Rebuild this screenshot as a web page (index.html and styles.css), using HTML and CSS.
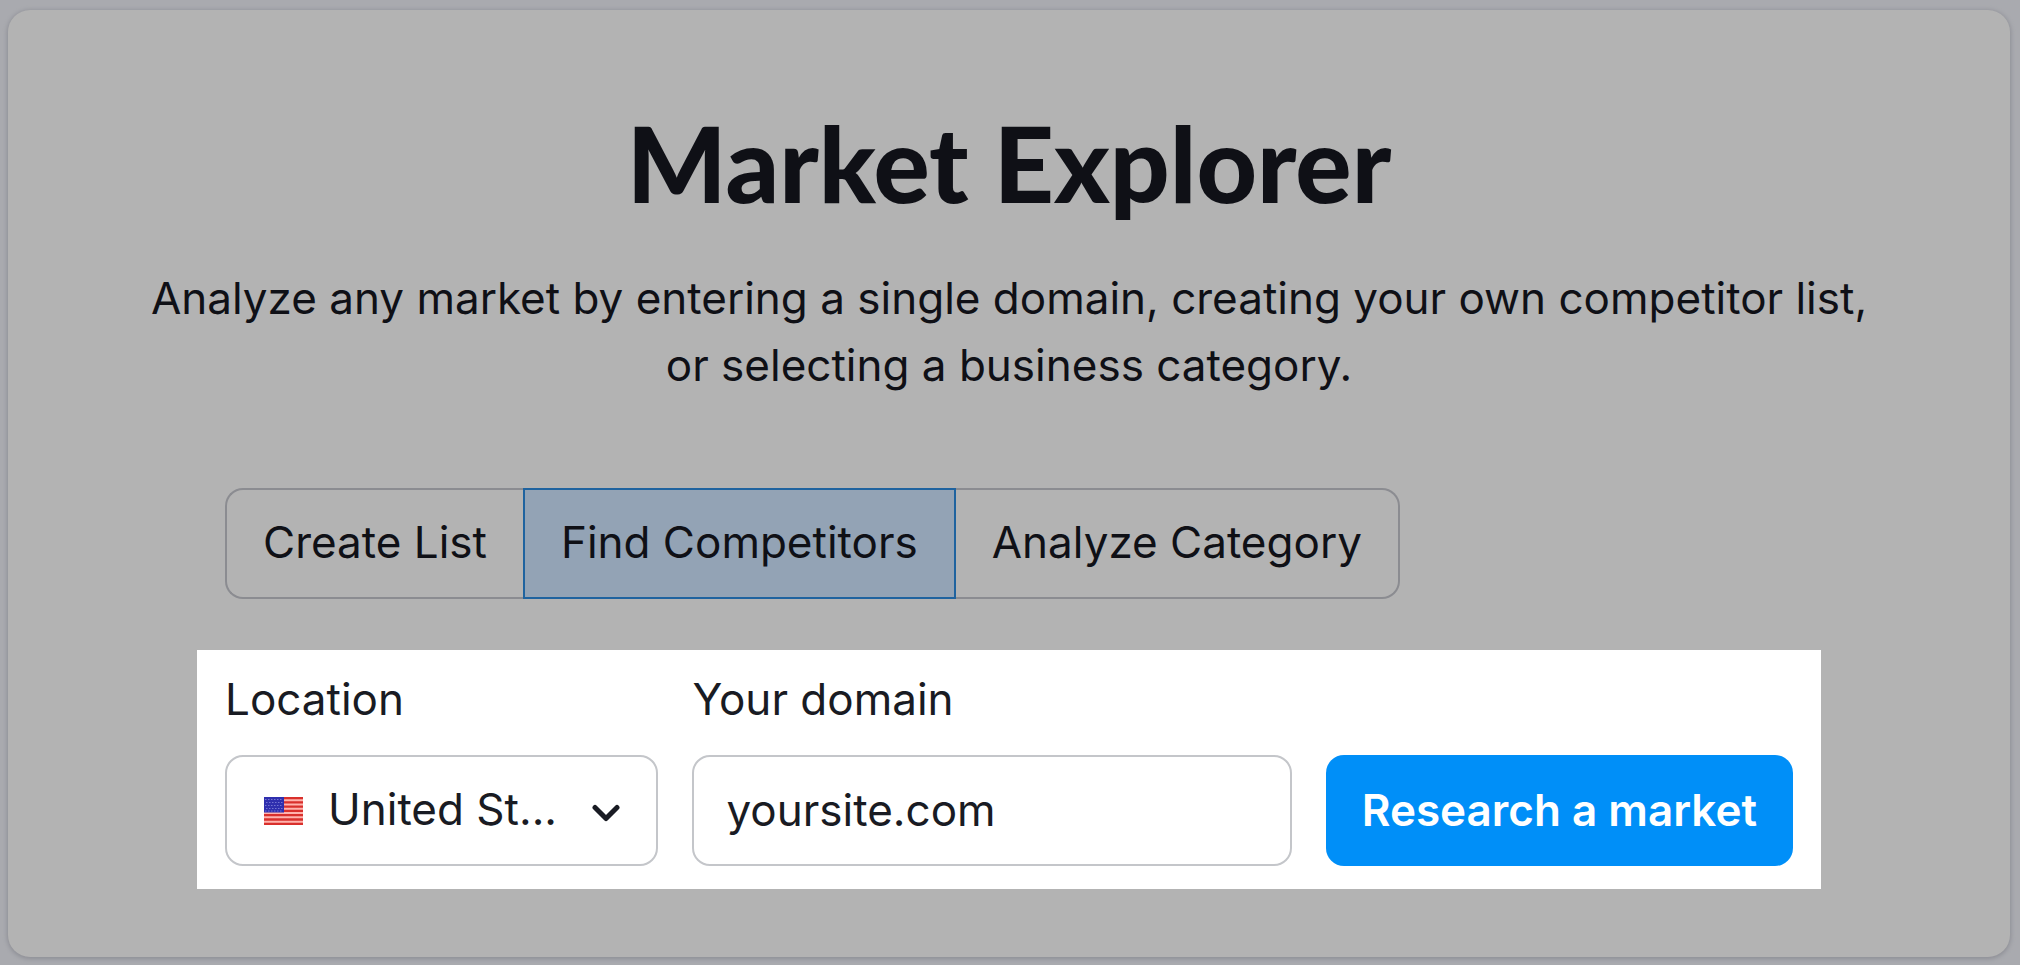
FILE: index.html
```html
<!DOCTYPE html>
<html lang="en">
<head>
<meta charset="utf-8">
<title>Market Explorer</title>
<link rel="stylesheet" href="styles.css">
</head>
<body>
<main class="card">
  <h1 class="title">Market Explorer</h1>
  <p class="lead">Analyze any market by entering a single domain, creating your own competitor list, or selecting a business category.</p>
  <div class="content">
    <div class="tabs">
      <button class="tab" type="button">Create List</button>
      <button class="tab tab-active" type="button" aria-pressed="true">Find Competitors</button>
      <button class="tab" type="button">Analyze Category</button>
    </div>
    <form class="search">
      <div class="field">
        <label class="label" for="location">Location</label>
        <div class="select-wrap">
          <select class="control select" id="location">
            <option>United St...</option>
          </select>
          <svg class="flag" viewBox="0 0 39 28" aria-hidden="true">
            <rect width="39" height="28" fill="#ffb3ad"/>
            <path d="M0 1h39M0 5.3h39M0 9.6h39M0 13.9h39M0 18.2h39M0 22.5h39M0 26.8h39" stroke="#d9302c" stroke-width="2.3"/>
            <rect width="20" height="15.5" fill="#2f2fae"/>
            <path d="M1 2.5h18M2 5.5h17M1 8.5h18M2 11.5h17M1 14h18" stroke="#7474d2" stroke-width="1" stroke-dasharray="1.5 1.5"/>
          </svg>
          <svg class="chevron" viewBox="0 0 28 18" aria-hidden="true">
            <path d="M3 3.5l11 11 11-11" fill="none" stroke="#191b23" stroke-width="5" stroke-linecap="round" stroke-linejoin="round"/>
          </svg>
        </div>
      </div>
      <div class="field">
        <label class="label" for="domain">Your domain</label>
        <input class="control" id="domain" type="text" value="yoursite.com">
      </div>
      <button class="submit" type="submit">Research a market</button>
    </form>
  </div>
</main>
</body>
</html>
```
FILE: styles.css
```css
* {
  box-sizing: border-box;
}

body {
  margin: 0;
  padding: 10px 10px 9px 8px;
  min-height: 100vh;
  display: flex;
  background: #a9aaaf;
  color: #0f1016;
  font-family: Inter, "Liberation Sans", sans-serif;
  font-size: 44px;
}

button,
input,
select {
  font: inherit;
  color: inherit;
}

.card {
  flex: 1;
  min-width: 0;
  padding: 92px 128px 68px;
  border-radius: 22px;
  background: #b3b3b3;
  box-shadow: 0 1px 4px 1px #8e8f96;
}

.title {
  margin: 0;
  font-family: Lato, Inter, sans-serif;
  font-size: 105px;
  font-weight: 900;
  line-height: 120px;
  text-align: center;
}

.lead {
  margin: 43px 0 0;
  line-height: 67px;
  text-align: center;
}

.content {
  max-width: 1624px;
  margin: 89px auto 0;
}

.tabs {
  display: flex;
  width: fit-content;
  margin: 0 28px 51px;
}

.tab {
  height: 111px;
  padding: 0 36px 4px;
  border: 2px solid #8b8c91;
  background: none;
}

.tab:first-child {
  border-right: 0;
  border-radius: 18px 0 0 18px;
}

.tab:last-child {
  border-left: 0;
  border-radius: 0 18px 18px 0;
}

.tab-active {
  border-color: #1f639f;
  background: #93a3b5;
}

.search {
  display: grid;
  grid-template-columns: 434fr 600fr auto;
  align-items: end;
  gap: 34px;
  padding: 19px 28px 23px;
  background: #fff;
  color: #191b23;
}

.field {
  display: grid;
  gap: 26px;
}

.label {
  line-height: 60px;
}

.control {
  width: 100%;
  min-width: 0;
  height: 111px;
  padding: 0 32px 2px;
  border: 2px solid #c4c6ca;
  border-radius: 18px;
  background: #fff;
}

.select-wrap {
  position: relative;
}

.select {
  appearance: none;
  padding: 0 72px 4px 101px;
}

.flag {
  position: absolute;
  top: 42px;
  left: 39px;
  width: 39px;
  height: 28px;
  pointer-events: none;
}

.chevron {
  position: absolute;
  top: 49px;
  right: 38px;
  width: 28px;
  height: 18px;
  pointer-events: none;
}

.submit {
  height: 111px;
  padding: 0 36px 2px;
  border: 0;
  border-radius: 18px;
  background: #008ff8;
  color: #fff;
  font-weight: 600;
}
```
